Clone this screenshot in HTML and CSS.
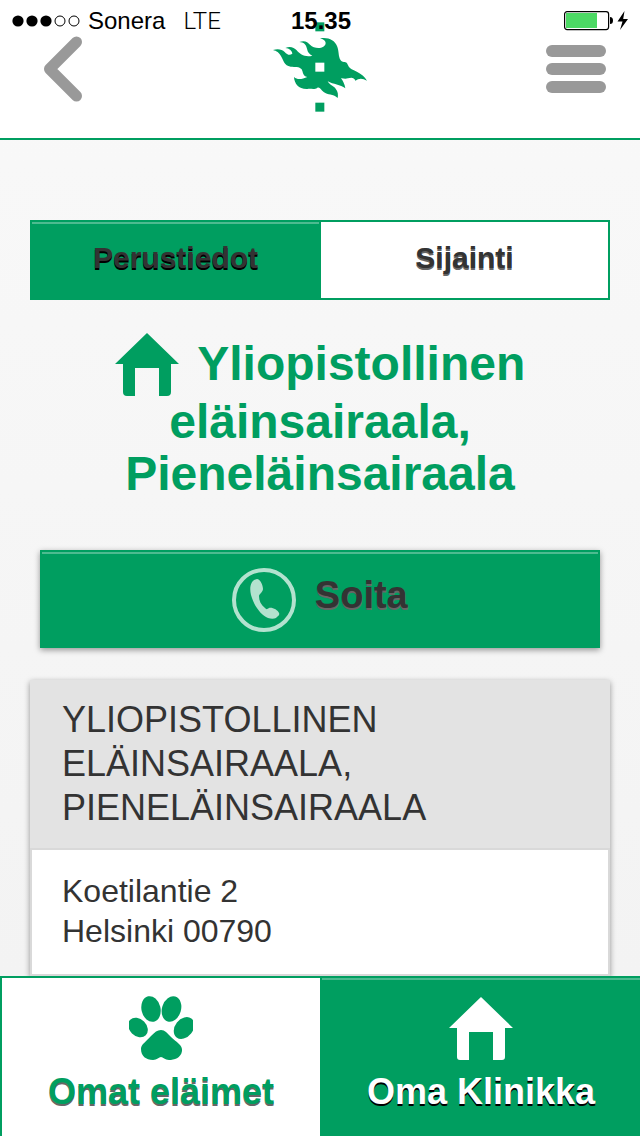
FILE: index.html
```html
<!DOCTYPE html>
<html lang="fi">
<head>
<meta charset="UTF-8" />
<meta name="viewport" content="width=device-width, initial-scale=1" />
<title>Oma Klinikka</title>
<link rel="stylesheet" href="styles.css">
</head>
<body>

<div class="statusbar">
    <div class="carrier">
        <svg class="signal" width="68" height="12" viewBox="0 0 68 12">
            <circle cx="6" cy="6" r="5.6" />
            <circle cx="20" cy="6" r="5.6" />
            <circle cx="34" cy="6" r="5.6" />
            <circle cx="48" cy="6" r="5" fill="none" stroke="#000" />
            <circle cx="62" cy="6" r="5" fill="none" stroke="#000" />
        </svg>
        <span>Sonera</span>
        <span class="network">LTE</span>
    </div>
    <div class="time">15.35</div>
    <div class="battery">
        <svg width="66" height="20" viewBox="0 0 66 20">
            <rect x="0.6" y="0.6" width="44" height="18" rx="2.5" fill="#fff" stroke="#000" stroke-width="1.2" />
            <rect x="2" y="2" width="31" height="15" fill="#4cd964" />
            <path d="M46 6 Q49 6 49 9.5 Q49 13 46 13 Z" />
            <path d="M60.5 0 L53.5 10.5 H58.5 L56 19 L64 8 H59.2 Z" />
        </svg>
    </div>
</div>

<header class="header">
    <button class="icon-button back" aria-label="Takaisin">
        <svg width="40" height="66" viewBox="0 0 40 66">
            <path d="M33.5 6 L6.5 33 L33.5 60" fill="none" stroke="#999" stroke-width="11" stroke-linecap="round" stroke-linejoin="round" />
        </svg>
    </button>
    <svg class="logo" width="94" height="94" viewBox="9 12 282 282">
        <path d="M9 96 C24 91 36 94 44 102 C52 111 60 113 67 107 C66 98 58 91 46 90 C60 84 72 88 80 97 C90 110 106 118 127 113 C118 108 113 103 111 92 C108 79 101 73 88 72 C104 66 113 72 120 80 C131 91 150 92 160 86 C171 80 170 66 150 61 C176 57 194 67 201 84 C208 101 204 114 212 127 C217 135 226 129 231 136 C235 143 237 150 245 154 C268 164 281 172 291 188 C281 183 273 180 264 184 L256 188 C252 177 243 178 234 181 C224 184 218 180 213 181 C219 189 224 198 226 211 C211 199 190 200 173 190 C179 201 190 203 197 212 C204 221 205 230 203 240 C188 226 174 233 161 222 C152 214 150 206 142 209 C134 216 124 211 112 213 C86 214 73 197 72 177 C84 188 98 182 112 177 C97 174 100 163 95 154 C88 144 75 149 62 146 C42 142 41 128 34 116 C27 103 20 99 9 96 Z" />
        <rect x="136" y="13" width="27" height="27" />
        <rect x="136" y="134" width="27" height="27" fill="#fff" />
        <rect x="136" y="254" width="27" height="27" />
    </svg>
    <button class="icon-button menu" aria-label="Valikko">
        <svg width="60" height="48" viewBox="0 0 60 48">
            <g fill="#999">
                <rect width="60" height="12" rx="6" />
                <rect y="18" width="60" height="12" rx="6" />
                <rect y="36" width="60" height="12" rx="6" />
            </g>
        </svg>
    </button>
</header>

<main class="content">
    <div class="tabs" role="tablist">
        <button class="tab active" role="tab" aria-selected="true">Perustiedot</button>
        <button class="tab" role="tab" aria-selected="false">Sijainti</button>
    </div>

    <h1>
        <svg class="title-icon" width="64" height="64" viewBox="0 0 64 64">
            <path d="M32 1 L64 32 H56 V60 Q56 64 52 64 H44 V36 H20 V64 H12 Q8 64 8 60 V32 H0 Z" />
        </svg>
        Yliopistollinen eläinsairaala, Pieneläinsairaala
    </h1>

    <button class="call">
        <svg class="call-icon" width="64" height="64" viewBox="0 0 64 64">
            <circle cx="32" cy="32" r="30" fill="none" stroke="#b3e2cf" stroke-width="4" />
            <path d="M25 11 C19 12 17 19 19 27 C22 38 29 47 36 50 C39 51 42 51 44 50 C46 48 48 47 47 45 C46 42 40 39 37 40 C35 41 35 42 33 40 C29 37 27 33 27 28 C27 26 31 24 31 21 C31 17 28 11 25 11 Z" fill="#b3e2cf" />
        </svg>
        Soita
    </button>

    <section class="card">
        <h2>Yliopistollinen eläinsairaala, Pieneläinsairaala</h2>
        <address>
            Koetilantie 2<br>
            Helsinki 00790
        </address>
    </section>
</main>

<nav class="bottom-nav">
    <a href="#elaimet">
        <svg width="64" height="64" viewBox="0 0 64 64">
            <ellipse cx="22" cy="13" rx="9.5" ry="13" transform="rotate(-13 22 13)" />
            <ellipse cx="42.5" cy="13" rx="9.5" ry="13" transform="rotate(17 42.5 13)" />
            <ellipse cx="9" cy="31.5" rx="8.5" ry="11" transform="rotate(-45 9 31.5)" />
            <ellipse cx="55" cy="32" rx="9" ry="12" transform="rotate(38 55 32)" />
            <path d="M32 34 C36 34 38 37 42 41 C47 46 54 49 53 55 C52 62 45 64 40 64 C36 64 34 61 32 61 C30 61 28 64 24 64 C17 64 12 60 12 53 C12 48 17 46 22 40 C26 36 28 34 32 34 Z" />
        </svg>
        <span>Omat eläimet</span>
    </a>
    <a href="#klinikka" class="active">
        <svg width="64" height="64" viewBox="0 0 64 64">
            <path d="M32 1 L64 32 H56 V61 Q56 64 53 64 H44 V36 H20 V64 H11 Q8 64 8 61 V32 H0 Z" />
        </svg>
        <span>Oma Klinikka</span>
    </a>
</nav>

</body>
</html>
```

FILE: styles.css
```css
* {
box-sizing: border-box;
}

body {
margin: 0;
height: 100vh;
display: flex;
flex-direction: column;
overflow: hidden;
background: linear-gradient(#f9f9f9, #f2f2f2);
color: #333;
font-family: 'Liberation Sans', Arial, sans-serif;
}

svg {
fill: #009e60;
}

button {
font-family: inherit;
font-weight: bold;
color: #333;
padding: 0;
cursor: pointer;
}

/* The phone's status bar lies over the header */
.statusbar {
position: absolute;
top: 0;
left: 0;
right: 0;
height: 42px;
padding: 0 10px 0 12px;
display: flex;
justify-content: space-between;
align-items: center;
color: #000;
font-size: 24px;
pointer-events: none;
}

.statusbar svg {
display: block;
fill: #000;
}

.carrier,
.battery {
flex: 1 1 0;
display: flex;
align-items: center;
gap: 8px;
}

.network {
font-family: 'Roboto', sans-serif;
font-weight: 300;
line-height: 28px;
margin-left: 10px;
}

.time {
font-weight: bold;
}

.battery {
justify-content: flex-end;
}

.header {
flex: none;
height: 140px;
padding: 0 34px;
display: grid;
grid-template-columns: 1fr auto 1fr;
align-items: center;
background: #fff;
border-bottom: 2px solid #009e60;
}

.icon-button {
background: none;
border: none;
}

.back {
justify-self: start;
padding-left: 9px;
}

.menu {
justify-self: end;
}

.icon-button svg,
.logo {
display: block;
}

.content {
flex: 1;
min-height: 0;
overflow: hidden;
padding: 80px 30px 0;
}

.tabs {
display: flex;
}

.tab {
flex: 1;
box-sizing: content-box;
height: 72px;
padding-bottom: 4px;
background: #fff;
border: 2px solid #009e60;
border-left: none;
font-size: 30px;
text-shadow: 0 2px 0 #666;
}

.tab.active {
background: #009e60;
border-left: 2px solid #009e60;
box-shadow: inset 0 2px 0 rgba(255, 255, 255, 0.3);
text-shadow: 0 2px 0 #000;
}

h1 {
margin: 32px 0 50px;
padding: 0 60px;
color: #009e60;
font-size: 48px;
line-height: 52px;
text-align: center;
}

.title-icon {
vertical-align: -16px;
margin-right: 6px;
}

.call {
display: block;
width: calc(100% - 20px);
margin: 0 10px 32px;
padding: 16px 0 14px;
background: #009e60;
border: 2px solid #009e60;
box-shadow: inset 0 2px 0 rgba(255, 255, 255, 0.3), 0 2px 6px rgba(0, 0, 0, 0.4);
font-size: 38px;
text-shadow: 0 2px 0 #666;
}

.call-icon {
vertical-align: -24px;
margin-right: 8px;
}

.card {
background: #fff;
box-shadow: 0 2px 6px rgba(0, 0, 0, 0.4);
}

.card h2 {
margin: 0;
padding: 18px 32px;
background: #e3e3e3;
font-size: 36px;
font-weight: normal;
line-height: 44px;
text-transform: uppercase;
}

.card address {
padding: 21px 30px 23px;
border: 2px solid #d9d9d9;
font-size: 32px;
font-style: normal;
line-height: 40px;
}

.bottom-nav {
flex: none;
display: flex;
}

.bottom-nav a {
flex: 1;
display: flex;
flex-direction: column;
align-items: center;
gap: 10px;
padding: 18px 0 22px;
background: #fff;
border-top: 2px solid #009e60;
border-left: 2px solid #009e60;
color: #009e60;
font-size: 36px;
font-weight: bold;
line-height: 44px;
text-decoration: none;
text-shadow: 0 2px 0 #666;
}

.bottom-nav a.active {
background: #009e60;
box-shadow: inset 0 2px 0 rgba(255, 255, 255, 0.3);
color: #fff;
text-shadow: 0 2px 0 #000;
}

.bottom-nav a.active svg {
fill: #fff;
}
```
